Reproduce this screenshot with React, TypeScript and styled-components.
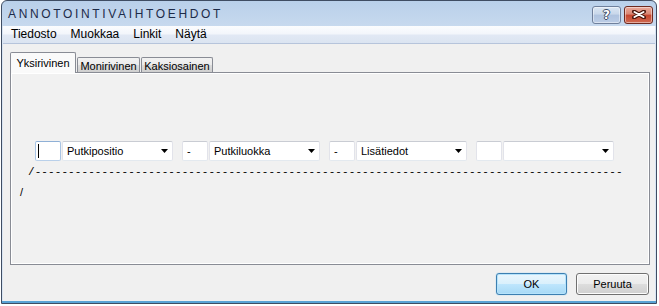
import React from 'react';
import styled, { createGlobalStyle } from 'styled-components';

const GlobalStyle = createGlobalStyle`
  html, body {
    margin: 0;
    padding: 0;
    background: #ffffff;
  }
  body {
    font-family: "Liberation Sans", Arial, sans-serif;
    font-size: 11px;
    color: #000;
  }
`;

const Window = styled.div`
  box-sizing: border-box;
  width: 656px;
  height: 304px;
  margin-left: 1px;
  border: 1px solid #3f4d63;
  border-radius: 6px 6px 0 0;
  padding: 0 1px 2px 1px;
  display: flex;
  flex-direction: column;
  overflow: hidden;
  background: linear-gradient(
    to bottom,
    #b9d0ea 0,
    #c7d9ee 25px,
    #d9e5f3 25px,
    #d9e5f3 calc(100% - 2px),
    #5aa3d5 calc(100% - 2px)
  );
`;

const TitleBar = styled.div`
  height: 25px;
  flex: none;
  display: flex;
  align-items: center;
  padding: 0 2px 0 5px;
`;

const Title = styled.span`
  font-size: 12px;
  letter-spacing: 2.65px;
  color: #1d2b49;
  flex: 1;
`;

const CaptionButtons = styled.div`
  display: flex;
  gap: 3px;
  margin-top: 2px;
`;

const CaptionButton = styled.div<{ $variant: 'help' | 'close' }>`
  box-sizing: border-box;
  width: 29px;
  height: 18px;
  border-radius: 3px;
  display: flex;
  align-items: center;
  justify-content: center;
  border: 1px solid ${p => (p.$variant === 'close' ? '#6d2a20' : '#6f809c')};
  background: ${p =>
    p.$variant === 'close'
      ? 'linear-gradient(to bottom, #e9a99b 0%, #d98673 45%, #c6452e 50%, #cf6a52 100%)'
      : 'linear-gradient(to bottom, #dbe6f3 0%, #c8d7ea 45%, #afc3df 50%, #bccde6 100%)'};
  box-shadow: inset 0 0 0 1px rgba(255, 255, 255, 0.45);
`;

const HelpGlyph = styled.span`
  font-family: "DejaVu Sans", "Liberation Sans", sans-serif;
  font-weight: bold;
  font-size: 12px;
  line-height: 12px;
  color: #ffffff;
  text-shadow: 1px 0 0 #3b4a63, -1px 0 0 #3b4a63, 0 1px 0 #3b4a63, 0 -1px 0 #3b4a63;
`;

const Client = styled.div`
  flex: 1;
  display: flex;
  flex-direction: column;
  background: #f0f0f0;
`;

const MenuBar = styled.div`
  box-sizing: border-box;
  height: 18px;
  flex: none;
  display: flex;
  align-items: center;
  padding-left: 1px;
  border-bottom: 1px solid #b6c4db;
  background: linear-gradient(to bottom, #fbfcfe 0%, #f3f6fb 45%, #e1e8f4 55%, #dbe4f1 100%);
`;

const MenuItem = styled.span`
  font-size: 12px;
  line-height: 17px;
  padding: 0 7px;
  color: #000;
`;

const Body = styled.div`
  flex: 1;
  display: flex;
  flex-direction: column;
  padding: 8px 5px 0 7px;
`;

const TabStrip = styled.div`
  height: 21px;
  margin-bottom: -1px;
  display: flex;
  align-items: flex-end;
  gap: 1px;
  position: relative;
  z-index: 1;
`;

const Tab = styled.div<{ $active?: boolean; $width: number }>`
  box-sizing: border-box;
  width: ${p => p.$width}px;
  height: ${p => (p.$active ? 21 : 15)}px;
  margin-bottom: ${p => (p.$active ? 0 : 1)}px;
  border: 1px solid #898c95;
  border-bottom: none;
  border-radius: 2px 2px 0 0;
  display: flex;
  align-items: center;
  justify-content: center;
  padding-top: ${p => (p.$active ? 0 : 1)}px;
  font-size: 11px;
  background: ${p =>
    p.$active
      ? '#fafafa'
      : 'linear-gradient(to bottom, #f2f2f2 0%, #ebebeb 50%, #dddddd 51%, #cfcfcf 100%)'};
`;

const TabPanel = styled.div`
  box-sizing: border-box;
  height: 193px;
  flex: none;
  display: flex;
  flex-direction: column;
  padding-top: 68px;
  border: 1px solid #898c95;
  box-shadow: inset 0 0 0 1px #ffffff;
  background: #f1f1f1;
`;

const FieldRow = styled.div`
  display: flex;
  gap: 9px;
  margin-left: 24px;
`;

const FieldGroup = styled.div`
  display: flex;
  gap: 1px;
`;

const TextBox = styled.div<{ $focused?: boolean }>`
  box-sizing: border-box;
  width: 26px;
  height: 20px;
  padding-left: 4px;
  line-height: 18px;
  border: 1px solid;
  border-color: ${p =>
    p.$focused ? '#8fb0d6 #a9c4e4 #b9d0ea #a9c4e4' : '#c9ccd3 #e2e3ea #e3e9ef #e2e3ea'};
  border-radius: 2px;
  background: #ffffff;
  position: relative;
`;

const Caret = styled.span`
  position: absolute;
  left: 2px;
  top: 2px;
  width: 1px;
  height: 14px;
  background: #000;
`;

const Combo = styled.div`
  box-sizing: border-box;
  width: 111px;
  height: 20px;
  display: flex;
  align-items: center;
  padding: 0 4px 0 4px;
  border: 1px solid;
  border-color: #c9ccd3 #e2e3ea #e3e9ef #e2e3ea;
  border-radius: 2px;
  background: #ffffff;
`;

const ComboText = styled.span`
  flex: 1;
  line-height: 18px;
  white-space: nowrap;
`;

const DashLine = styled.div`
  margin: 5px 0 0 17px;
  font-family: "Liberation Mono", "Courier New", monospace;
  font-size: 11px;
  line-height: 12px;
  letter-spacing: 0.08px;
  white-space: nowrap;
`;

const SlashLine = styled.div`
  margin: 8px 0 0 9px;
  font-size: 11px;
  line-height: 12px;
`;

const ButtonRow = styled.div`
  display: flex;
  justify-content: flex-end;
  gap: 9px;
  margin-top: 8px;
  padding-right: 1px;
`;

const Button = styled.div<{ $default?: boolean; $width: number }>`
  box-sizing: border-box;
  width: ${p => p.$width}px;
  height: 22px;
  border-radius: 3px;
  display: flex;
  align-items: center;
  justify-content: center;
  font-size: 11px;
  border: 1px solid ${p => (p.$default ? '#3c7fb1' : '#707070')};
  background: ${p =>
    p.$default
      ? 'linear-gradient(to bottom, #eaf6fd 0%, #d9f0fc 50%, #bee6fd 51%, #a7d9f5 100%)'
      : 'linear-gradient(to bottom, #f2f2f2 0%, #ebebeb 50%, #dddddd 51%, #cfcfcf 100%)'};
  box-shadow: ${p =>
    p.$default ? 'inset 0 0 0 1px #b6e3fb, 0 0 1px #4ab3f0' : 'inset 0 0 0 1px #fcfcfc'};
`;

const ArrowDown = () => (
  <svg width="7" height="4" viewBox="0 0 7 4">
    <path d="M0 0H7L3.5 4Z" fill="#000" />
  </svg>
);

const CloseIcon = () => (
  <svg width="14" height="9" viewBox="0 0 14 9">
    <path d="M2 1.5L12 7.5M12 1.5L2 7.5" stroke="#4d1910" strokeWidth="4" strokeLinecap="round" />
    <path d="M2.5 2L11.5 7M11.5 2L2.5 7" stroke="#ffffff" strokeWidth="2" strokeLinecap="round" />
  </svg>
);

const fields = [
  { value: '', label: 'Putkipositio', focused: true },
  { value: '-', label: 'Putkiluokka' },
  { value: '-', label: 'Lisätiedot' },
  { value: '', label: '' },
];

export default function App() {
  return (
    <>
      <GlobalStyle />
      <Window>
        <TitleBar>
          <Title>ANNOTOINTIVAIHTOEHDOT</Title>
          <CaptionButtons>
            <CaptionButton $variant="help">
              <HelpGlyph>?</HelpGlyph>
            </CaptionButton>
            <CaptionButton $variant="close">
              <CloseIcon />
            </CaptionButton>
          </CaptionButtons>
        </TitleBar>
        <Client>
          <MenuBar>
            <MenuItem>Tiedosto</MenuItem>
            <MenuItem>Muokkaa</MenuItem>
            <MenuItem>Linkit</MenuItem>
            <MenuItem>Näytä</MenuItem>
          </MenuBar>
          <Body>
            <TabStrip>
              <Tab $active $width={66}>Yksirivinen</Tab>
              <Tab $width={63}>Monirivinen</Tab>
              <Tab $width={72}>Kaksiosainen</Tab>
            </TabStrip>
            <TabPanel>
              <FieldRow>
                {fields.map((f, i) => (
                  <FieldGroup key={i}>
                    <TextBox $focused={f.focused}>
                      {f.focused && <Caret />}
                      {f.value}
                    </TextBox>
                    <Combo>
                      <ComboText>{f.label}</ComboText>
                      <ArrowDown />
                    </Combo>
                  </FieldGroup>
                ))}
              </FieldRow>
              <DashLine>/{'-'.repeat(88)}</DashLine>
              <SlashLine>/</SlashLine>
            </TabPanel>
            <ButtonRow>
              <Button $default $width={71}>OK</Button>
              <Button $width={73}>Peruuta</Button>
            </ButtonRow>
          </Body>
        </Client>
      </Window>
    </>
  );
}
